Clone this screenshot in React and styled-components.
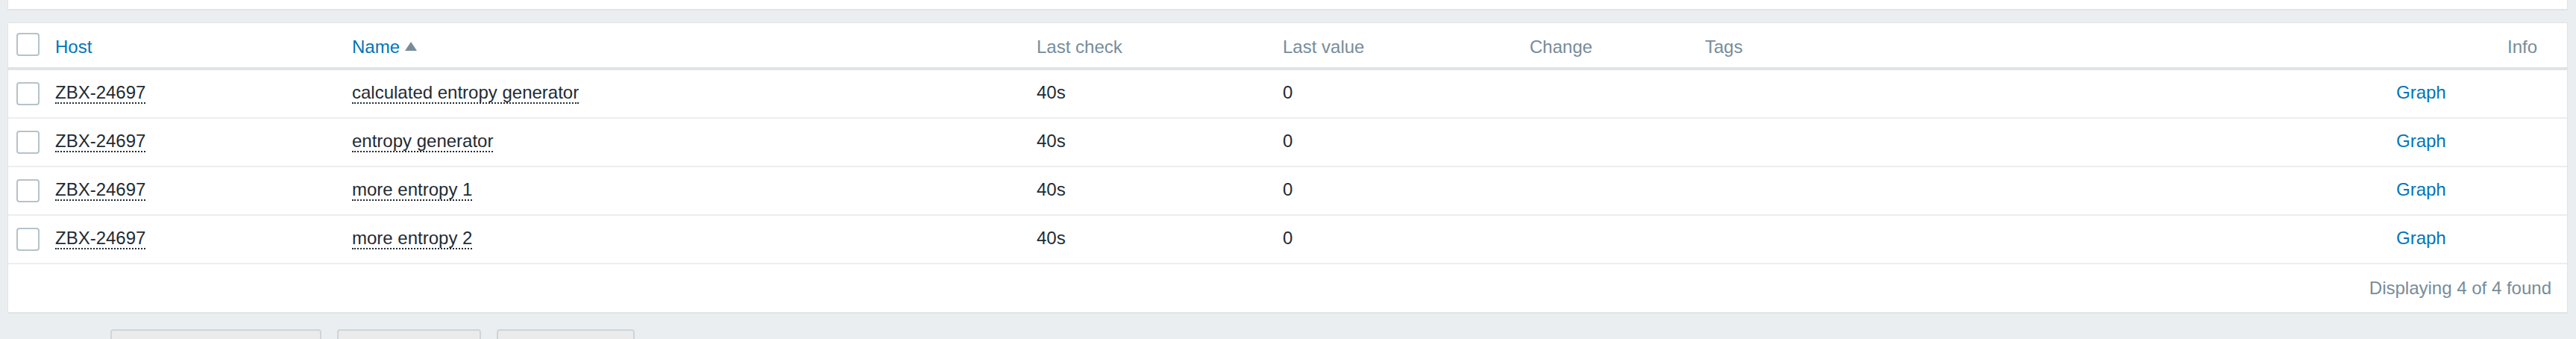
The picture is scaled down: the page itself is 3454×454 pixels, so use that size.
import React from 'react';
import styled, { createGlobalStyle } from 'styled-components';

const GlobalStyle = createGlobalStyle`
  html, body {
    margin: 0;
    padding: 0;
    background: #ebeef0;
    font-family: "Liberation Sans", Arial, sans-serif;
    font-size: 24px;
    color: #1f2c33;
    overflow: hidden;
  }
`;

const COLUMNS = '53px 398px 918px 330px 331px 235px 927px 149px 90px';

const Page = styled.div`
  padding: 0 11px 0 10px;
`;

const FilterPanel = styled.div`
  height: 12px;
  background: #ffffff;
  border: 1px solid #dfe4e7;
  border-top: none;
  border-bottom-width: 2px;
  margin-bottom: 16px;
`;

const ListPanel = styled.div`
  background: #ffffff;
  border: 1px solid #dfe4e7;
  border-bottom-width: 2px;
`;

const HeaderRow = styled.div`
  display: grid;
  grid-template-columns: ${COLUMNS};
  align-items: center;
  height: 59px;
  border-bottom: 4px solid #dfe4e7;
`;

const Row = styled.div`
  display: grid;
  grid-template-columns: ${COLUMNS};
  align-items: center;
  height: 63px;
  border-bottom: 2px solid #ebeef0;
`;

const CheckCell = styled.div`
  padding-left: 11px;
  display: flex;
  align-items: center;
  margin-bottom: ${p => (p.$head ? '2px' : '1px')};
`;

const CheckBox = styled.span`
  display: block;
  width: 31px;
  height: 31px;
  box-sizing: border-box;
  border: 2px solid #b6c3c9;
  border-radius: 4px;
  background: #ffffff;
`;

const HeadCell = styled.div`
  padding: 5px 10px 0;
  color: ${p => (p.$sort ? '#0275b8' : '#768d99')};
  white-space: nowrap;
  display: flex;
  align-items: center;
`;

const SortArrow = styled.span`
  display: inline-block;
  width: 0;
  height: 0;
  margin-left: 7px;
  margin-top: -2px;
  border-left: 8px solid transparent;
  border-right: 8px solid transparent;
  border-bottom: 12px solid #768d99;
`;

const Cell = styled.div`
  padding: 0 10px 3px;
  white-space: nowrap;
`;

const ActionLink = styled.span`
  border-bottom: 2px dotted #1f2c33;
`;

const GraphLink = styled.span`
  color: #0275b8;
`;

const Footer = styled.div`
  height: 64px;
  display: flex;
  align-items: center;
  justify-content: flex-end;
  padding-right: 21px;
  color: #768d99;
`;

const ActionBar = styled.div`
  display: flex;
  align-items: flex-start;
  gap: 21px;
  margin-top: 21px;
  padding-left: 11px;
`;

const SelectedSpacer = styled.span`
  width: 106px;
`;

const Button = styled.button`
  width: ${p => p.$w}px;
  height: 48px;
  box-sizing: border-box;
  border: 2px solid #cdd5d9;
  border-radius: 4px;
  background: #ecebeb;
  padding: 0;
`;

const items = [
  'calculated entropy generator',
  'entropy generator',
  'more entropy 1',
  'more entropy 2',
];

export default function App() {
  return (
    <Page>
      <GlobalStyle />
      <FilterPanel />
      <ListPanel>
        <HeaderRow>
          <CheckCell $head><CheckBox /></CheckCell>
          <HeadCell $sort>Host</HeadCell>
          <HeadCell $sort>Name<SortArrow /></HeadCell>
          <HeadCell>Last check</HeadCell>
          <HeadCell>Last value</HeadCell>
          <HeadCell>Change</HeadCell>
          <HeadCell>Tags</HeadCell>
          <HeadCell />
          <HeadCell>Info</HeadCell>
        </HeaderRow>
        {items.map(name => (
          <Row key={name}>
            <CheckCell><CheckBox /></CheckCell>
            <Cell><ActionLink>ZBX-24697</ActionLink></Cell>
            <Cell><ActionLink>{name}</ActionLink></Cell>
            <Cell>40s</Cell>
            <Cell>0</Cell>
            <Cell />
            <Cell />
            <Cell><GraphLink>Graph</GraphLink></Cell>
            <Cell />
          </Row>
        ))}
        <Footer>Displaying 4 of 4 found</Footer>
      </ListPanel>
      <ActionBar>
        <SelectedSpacer />
        <Button $w={283} aria-label="Display stacked graph" />
        <Button $w={193} aria-label="Display graph" />
        <Button $w={185} aria-label="Execute now" />
      </ActionBar>
    </Page>
  );
}
